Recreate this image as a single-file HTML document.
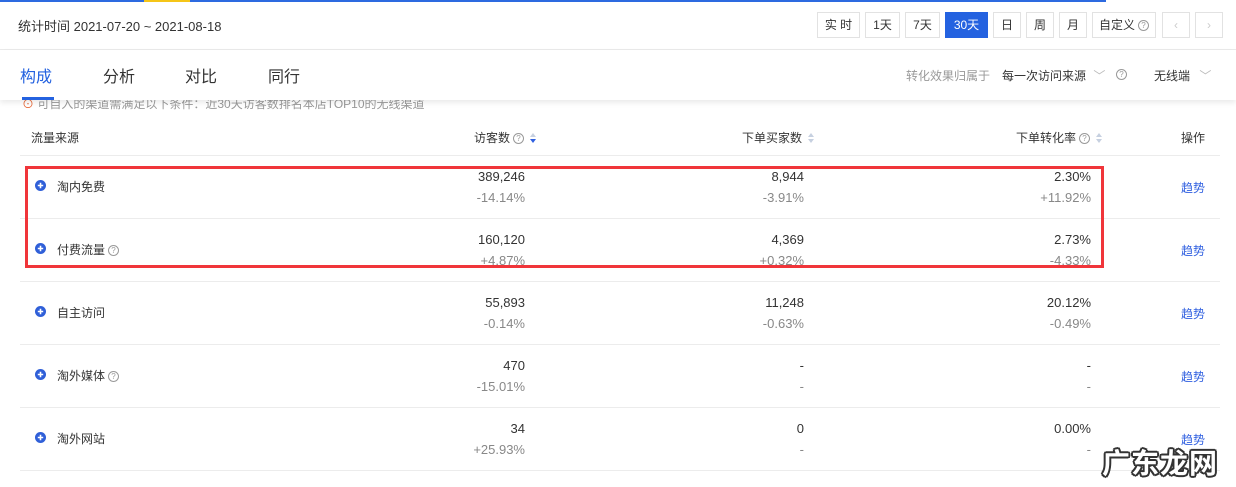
<!DOCTYPE html>
<html><head><meta charset="utf-8"><style>
*{margin:0;padding:0;box-sizing:border-box}
body{width:1236px;height:487px;overflow:hidden;background:#fff;font-family:"Liberation Sans","Noto Sans CJK SC",sans-serif;color:#333;position:relative;font-size:12px}
.a{position:absolute;white-space:nowrap}
.btn{position:absolute;top:12px;height:26px;border:1px solid #e2e2e2;background:#fff;font-size:12px;line-height:24px;text-align:center;color:#333}
.q{display:inline-block;width:11px;height:11px;border:1px solid #999;border-radius:50%;font-size:8px;line-height:9px;text-align:center;color:#999;vertical-align:1px;margin-left:3px}
.line{position:absolute;left:20px;width:1200px;height:1px;background:#ececec}
.plus{position:absolute;left:35px;width:11px;height:11px}
.n{position:absolute;text-align:right;font-size:13px;color:#333}
.p{position:absolute;text-align:right;font-size:13px;color:#888}
.tr{position:absolute;left:1181px;color:#3060e0;font-size:12px}
.sort{display:inline-block;margin-left:6px;vertical-align:-1px;width:7px;height:10px;position:relative}
.sort:before{content:"";position:absolute;left:0;top:0;border:3.5px solid transparent;border-bottom:4px solid #c6d0e0;border-top:0}
.sort:after{content:"";position:absolute;left:0;top:6px;border:3.5px solid transparent;border-top:4px solid #c6d0e0;border-bottom:0}
.sort.d:after{border-top-color:#3060e0}
</style></head><body>
<svg width="0" height="0" style="position:absolute"><defs><symbol id="pl" viewBox="0 0 11 11"><circle cx="5.5" cy="5.5" r="5.5" fill="#2f5fd8"/><path d="M2.8 5.5H8.2M5.5 2.8V8.2" stroke="#fff" stroke-width="1.6"/></symbol></defs></svg>
<div class="a" style="left:0;top:0;width:1106px;height:2px;background:#2d6ae0"></div>
<div class="a" style="left:144px;top:0;width:46px;height:2px;background:#f5c518"></div>
<div class="a" style="left:18px;top:16px;font-size:13px;color:#333">统计时间 2021-07-20 ~ 2021-08-18</div>
<div class="btn" style="left:817px;width:43px">实 时</div>
<div class="btn" style="left:865px;width:35px">1天</div>
<div class="btn" style="left:905px;width:35px">7天</div>
<div class="btn" style="left:945px;width:43px;background:#2462e0;border-color:#2462e0;color:#fff">30天</div>
<div class="btn" style="left:993px;width:28px">日</div>
<div class="btn" style="left:1026px;width:28px">周</div>
<div class="btn" style="left:1059px;width:28px">月</div>
<div class="btn" style="left:1092px;width:64px">自定义<span class="q">?</span></div>
<div class="btn" style="left:1162px;width:28px;color:#ccc">‹</div>
<div class="btn" style="left:1195px;width:28px;color:#ccc">›</div>
<div class="a" style="left:0;top:49px;width:1236px;height:1px;background:#eaeaea"></div>

<div class="a" style="left:22px;top:95px;font-size:12px;color:#999"><span style="color:#e86a3a">⊙</span> 可自入的渠道需满足以下条件：近30天访客数排名本店TOP10的无线渠道</div>
<div class="a" style="left:0;top:50px;width:1236px;height:50px;background:#fff;box-shadow:0 3px 5px rgba(0,0,0,0.08)"></div>
<div class="a" style="left:20px;top:63px;font-size:16px;color:#2462e0">构成</div>
<div class="a" style="left:103px;top:63px;font-size:16px">分析</div>
<div class="a" style="left:185px;top:63px;font-size:16px">对比</div>
<div class="a" style="left:268px;top:63px;font-size:16px">同行</div>
<div class="a" style="left:22px;top:97px;width:32px;height:3px;background:#2462e0"></div>
<div class="a" style="left:906px;top:67px;color:#999">转化效果归属于</div>
<div class="a" style="left:1002px;top:67px;color:#333">每一次访问来源 <span style="color:#bbb;margin-left:4px">﹀</span></div>
<div class="a" style="left:1116px;top:67px"><span class="q" style="margin:0">?</span></div>
<div class="a" style="left:1154px;top:67px;color:#333">无线端 <span style="color:#bbb;margin-left:6px">﹀</span></div>

<div class="a" style="left:31px;top:129px">流量来源</div>
<div class="a" style="left:474px;top:129px">访客数<span class="q">?</span><span class="sort d"></span></div>
<div class="a" style="left:742px;top:129px">下单买家数<span class="sort"></span></div>
<div class="a" style="left:1016px;top:129px">下单转化率<span class="q">?</span><span class="sort"></span></div>
<div class="a" style="left:1181px;top:129px">操作</div>
<div class="line" style="top:155px"></div>
<div class="line" style="top:218px"></div>
<div class="line" style="top:281px"></div>
<div class="line" style="top:344px"></div>
<div class="line" style="top:407px"></div>
<div class="line" style="top:470px"></div>

<svg class="plus" style="top:180px"><use href="#pl"/></svg><div class="a" style="left:57px;top:178px">淘内免费</div>
<div class="n" style="right:711px;top:169px">389,246</div><div class="p" style="right:711px;top:190px">-14.14%</div>
<div class="n" style="right:432px;top:169px">8,944</div><div class="p" style="right:432px;top:190px">-3.91%</div>
<div class="n" style="right:145px;top:169px">2.30%</div><div class="p" style="right:145px;top:190px">+11.92%</div>
<div class="tr" style="top:179px">趋势</div>

<svg class="plus" style="top:243px"><use href="#pl"/></svg><div class="a" style="left:57px;top:241px">付费流量<span class="q">?</span></div>
<div class="n" style="right:711px;top:232px">160,120</div><div class="p" style="right:711px;top:253px">+4.87%</div>
<div class="n" style="right:432px;top:232px">4,369</div><div class="p" style="right:432px;top:253px">+0.32%</div>
<div class="n" style="right:145px;top:232px">2.73%</div><div class="p" style="right:145px;top:253px">-4.33%</div>
<div class="tr" style="top:242px">趋势</div>

<svg class="plus" style="top:306px"><use href="#pl"/></svg><div class="a" style="left:57px;top:304px">自主访问</div>
<div class="n" style="right:711px;top:295px">55,893</div><div class="p" style="right:711px;top:316px">-0.14%</div>
<div class="n" style="right:432px;top:295px">11,248</div><div class="p" style="right:432px;top:316px">-0.63%</div>
<div class="n" style="right:145px;top:295px">20.12%</div><div class="p" style="right:145px;top:316px">-0.49%</div>
<div class="tr" style="top:305px">趋势</div>

<svg class="plus" style="top:369px"><use href="#pl"/></svg><div class="a" style="left:57px;top:367px">淘外媒体<span class="q">?</span></div>
<div class="n" style="right:711px;top:358px">470</div><div class="p" style="right:711px;top:379px">-15.01%</div>
<div class="n" style="right:432px;top:358px">-</div><div class="p" style="right:432px;top:379px">-</div>
<div class="n" style="right:145px;top:358px">-</div><div class="p" style="right:145px;top:379px">-</div>
<div class="tr" style="top:368px">趋势</div>

<svg class="plus" style="top:432px"><use href="#pl"/></svg><div class="a" style="left:57px;top:430px">淘外网站</div>
<div class="n" style="right:711px;top:421px">34</div><div class="p" style="right:711px;top:442px">+25.93%</div>
<div class="n" style="right:432px;top:421px">0</div><div class="p" style="right:432px;top:442px">-</div>
<div class="n" style="right:145px;top:421px">0.00%</div><div class="p" style="right:145px;top:442px">-</div>
<div class="tr" style="top:431px">趋势</div>

<div class="a" style="left:25px;top:166px;width:1079px;height:102px;border:3px solid #f0353a"></div>
<div class="a" style="left:1102px;top:442px;font-size:28px;font-weight:bold;color:#fff;letter-spacing:1px;text-shadow:2px 0 #333,-2px 0 #333,0 2px #333,0 -2px #333,1.5px 1.5px #333,-1.5px -1.5px #333,1.5px -1.5px #333,-1.5px 1.5px #333">广东龙网</div>
</body></html>
